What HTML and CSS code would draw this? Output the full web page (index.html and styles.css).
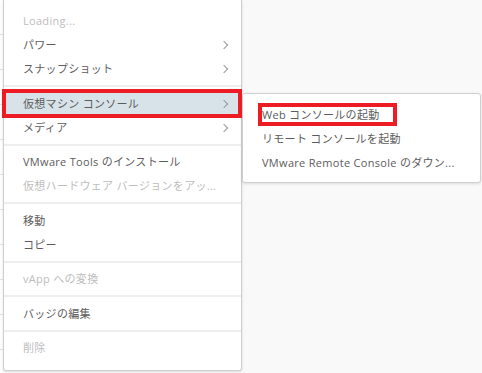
FILE: index.html
```html
<!DOCTYPE html>
<html lang="ja">
<head>
    <meta charset="UTF-8">
    <title>仮想マシン コンテキストメニュー</title>
    <link rel="stylesheet" href="styles.css">
</head>
<body>
<div class="screen">
    <div class="page-edge"></div>

    <ul class="menu">
        <li class="item disabled">Loading...</li>
        <li class="item has-sub">パワー</li>
        <li class="item has-sub">スナップショット</li>
        <li class="divider"></li>
        <li class="item has-sub active marked">仮想マシン コンソール</li>
        <li class="item has-sub">メディア</li>
        <li class="divider"></li>
        <li class="item">VMware Tools のインストール</li>
        <li class="item disabled">仮想ハードウェア バージョンをアッ...</li>
        <li class="divider"></li>
        <li class="item">移動</li>
        <li class="item">コピー</li>
        <li class="divider"></li>
        <li class="item disabled">vApp への変換</li>
        <li class="divider"></li>
        <li class="item">バッジの編集</li>
        <li class="divider"></li>
        <li class="item disabled">削除</li>
    </ul>

    <ul class="menu submenu">
        <li class="item marked-text">Web コンソールの起動</li>
        <li class="item">リモート コンソールを起動</li>
        <li class="item">VMware Remote Console のダウン...</li>
    </ul>
</div>
</body>
</html>
```

FILE: styles.css
```css
body {
    margin: 0;
    background-color: #f9f9f9;
    font-family: "Open Sans", "Noto Sans CJK JP", sans-serif;
    font-size: 11px;
    letter-spacing: 0.3px;
    color: #5c5c5c;
}
.screen {
    display: flex;
    align-items: flex-start;
    width: 482px;
    height: 373px;
    overflow: hidden;
}
.page-edge {
    width: 3px;
    height: 373px;
    flex-shrink: 0;
    background: repeating-linear-gradient(to bottom, #fff 0, #fff 34px, #e4e4e4 34px, #e4e4e4 35px);
}
.menu {
    list-style: none;
    margin: 0;
    padding: 9px 0 10px;
    width: 237px;
    flex-shrink: 0;
    background-color: white;
    border: 1px solid #cfcfcf;
    border-top: none;
    border-radius: 0 0 3px 3px;
    box-shadow: 0 1px 3px rgba(0, 0, 0, 0.12);
}
.submenu {
    margin-top: 93px;
    padding: 9px 0 7px;
    width: 237px;
    border-top: 1px solid #cfcfcf;
    border-radius: 3px;
}
.item {
    position: relative;
    height: 24px;
    line-height: 24px;
    padding: 0 20px 0 19px;
    white-space: nowrap;
}
.disabled {
    color: #bdbdbd;
}
.has-sub::before {
    content: "";
    position: absolute;
    right: 14px;
    top: 9px;
    width: 5px;
    height: 5px;
    border-top: 1px solid #9a9a9a;
    border-right: 1px solid #9a9a9a;
    transform: rotate(45deg);
}
.active {
    background-color: #d8e3e9;
}
.divider {
    height: 2px;
    margin: 4px 0 4.5px;
    background-color: #eeeeee;
}
/* red annotation boxes */
.marked::after,
.marked-text::after {
    content: "";
    position: absolute;
    box-sizing: border-box;
    border: 4px solid #ed1c24;
}
.marked::after {
    top: -3px;
    bottom: -2px;
    left: -2px;
    right: -1px;
}
.marked-text::after {
    top: 0;
    left: 15px;
    width: 139px;
    height: 23px;
}
```
